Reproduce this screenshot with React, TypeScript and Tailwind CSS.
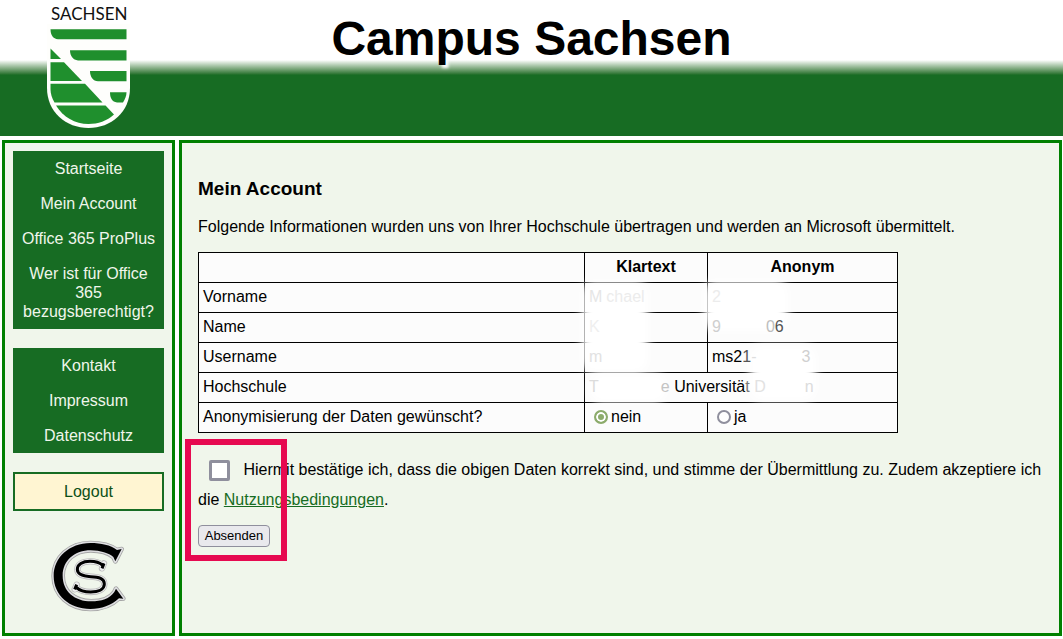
import { useState } from "react";
import type { ReactNode } from "react";

const mainLinks = [
  { name: "Startseite", href: "#start" },
  { name: "Mein Account", href: "#account" },
  { name: "Office 365 ProPlus", href: "#office" },
  { name: "Wer ist für Office 365 bezugsberechtigt?", href: "#berechtigt" },
];

const metaLinks = [
  { name: "Kontakt", href: "#kontakt" },
  { name: "Impressum", href: "#impressum" },
  { name: "Datenschutz", href: "#datenschutz" },
];

function SachsenLogo() {
  return (
    <svg width="84" height="129" viewBox="47 0 84 129" role="img" aria-label="Sachsen">
      <path
        d="M47 24H130V88C130 112 111 128 88.5 128S47 112 47 88Z"
        fill="#fefefc"
      />
      <text x="51" y="20" fontSize="17" fontFamily="Lato, sans-serif" fill="#111">
        SACHSEN
      </text>
      <g fill="#1f8f2d">
        <path d="M50.5 29.3H126.5V39.3H58C53 39 50.5 35 50.5 29.3Z" />
        <path d="M70 50.3H126.5V60.5H78C73 60 70 56 70 50.3Z" />
        <path d="M90 71H126.5V81.3H98C93 81 90 77 90 71Z" />
        <path d="M110 92.3H126.5C126.5 96 125 99.5 123 102.5H117C112 102 110 98 110 92.3Z" />
        <path d="M50.5 48.5L61 59H50.5Z" />
        <path d="M50.5 62.2H64L82 81H50.5Z" />
        <path d="M50.5 83.8H85L102.5 102.5H54.5C52 98 50.5 94 50.5 89Z" />
        <path d="M56 105.5H105.5L114 114.5C107 121 98 124 88.5 124C75 124 63 117 56 105.5Z" />
      </g>
    </svg>
  );
}

const cPath =
  "M276 85L262 88C242 73 215 67 182 67C120 67 72 110 72 166C72 224 120 265 182 265C215 265 245 255 268 233L281 234L259 204L254 214C240 234 215 242 185 242C135 242 99 212 99 165C99 120 135 89 183 89C212 89 238 98 251 109L257 122Z";
const sPath =
  "M223 128L217 143M219 134C207 123 193 122 181 122C158 122 143 132 143 146C143 162 160 167 183 168C208 169 224 173 224 190C224 207 205 214 183 214C165 214 150 210 140 200M135 206L141 192";

function CsLogo() {
  return (
    <svg width="80" height="74" viewBox="58 55 240 222" role="img" aria-label="Campus Sachsen">
      <g strokeLinejoin="round">
        <path d={cPath} fill="none" stroke="#a5a5a5" strokeWidth="14" />
        <path d={cPath} fill="none" stroke="#dedee1" strokeWidth="9" />
        <path d={cPath} fill="#000" />
      </g>
      <path d={sPath} fill="none" stroke="#bdbdbd" strokeWidth="19" strokeLinecap="round" />
      <path d={sPath} fill="none" stroke="#f0f0f1" strokeWidth="14" strokeLinecap="round" />
      <path d={sPath} fill="none" stroke="#000" strokeWidth="9" />
    </svg>
  );
}

function NavBlock({ label, links }: { label: string; links: { name: string; href: string }[] }) {
  return (
    <nav aria-label={label} className="mb-[19px] bg-[#176c23]">
      <ul>
        {links.map((link) => (
          <li key={link.name}>
            <a
              href={link.href}
              className="block px-2 py-2 text-center leading-[19px] text-[#f0f6eb] hover:underline"
            >
              {link.name}
            </a>
          </li>
        ))}
      </ul>
    </nav>
  );
}

function Cell({ children, colSpan }: { children?: ReactNode; colSpan?: number }) {
  return (
    <td colSpan={colSpan} className="h-[30px] border border-black px-1 pt-0 pb-[2px]">
      <span className="relative z-10 whitespace-nowrap">{children}</span>
    </td>
  );
}

const radioClass =
  "ml-[5px] mr-[3px] size-[14px] shrink-0 appearance-none rounded-full border-2 border-[#8f8f9d] bg-white checked:border-[#8cab6b] checked:bg-[#8cab6b] checked:shadow-[inset_0_0_0_2px_white]";

function AccountTable() {
  const [anonym, setAnonym] = useState(false);

  return (
    <div className="relative mt-[10px] w-[700px]">
      <table className="w-full table-fixed border-collapse bg-[#fcfcfc] leading-[27px]">
        <colgroup>
          <col className="w-[386px]" />
          <col className="w-[123px]" />
          <col className="w-[190px]" />
        </colgroup>
        <thead>
          <tr>
            <td className="h-[30px] border border-black p-0" />
            <th className="h-[30px] border border-black p-0 pb-[2px]">Klartext</th>
            <th className="h-[30px] border border-black p-0 pb-[2px]">Anonym</th>
          </tr>
        </thead>
        <tbody>
          <tr>
            <Cell>Vorname</Cell>
            <Cell>
              <span className="text-[#e6e6e6]">M</span>
              <span className="ml-1 text-[#ececec]">chael</span>
            </Cell>
            <Cell>
              <span className="text-[#ececec]">2</span>
            </Cell>
          </tr>
          <tr>
            <Cell>Name</Cell>
            <Cell>
              <span className="text-[#efefef]">K</span>
            </Cell>
            <Cell>
              <span className="text-[#cfcfcf]">9</span>
              <span className="ml-[45px] text-[#bdbdbd]">0</span>
              <span className="text-[#555]">6</span>
            </Cell>
          </tr>
          <tr>
            <Cell>Username</Cell>
            <Cell>
              <span className="text-[#e2e2e2]">m</span>
            </Cell>
            <Cell>
              ms2<span className="text-[#555]">1</span>
              <span className="text-[#dedede]">-</span>
              <span className="ml-[45px] text-[#d0d0d0]">3</span>
            </Cell>
          </tr>
          <tr>
            <Cell>Hochschule</Cell>
            <Cell colSpan={2}>
              <span className="text-[#dcdcdc]">T</span>
              <span className="ml-[62px] text-[#c4c4c4]">e</span> Universitä
              <span className="text-[#777]">t</span>{" "}
              <span className="text-[#e2e2e2]">D</span>
              <span className="ml-[39px] text-[#dcdcdc]">n</span>
            </Cell>
          </tr>
          <tr>
            <Cell>Anonymisierung der Daten gewünscht?</Cell>
            <Cell>
              <label className="flex items-center">
                <input
                  type="radio"
                  name="anonym"
                  checked={!anonym}
                  onChange={() => setAnonym(false)}
                  className={radioClass}
                />
                nein
              </label>
            </Cell>
            <Cell>
              <label className="flex items-center">
                <input
                  type="radio"
                  name="anonym"
                  checked={anonym}
                  onChange={() => setAnonym(true)}
                  className={radioClass}
                />
                ja
              </label>
            </Cell>
          </tr>
        </tbody>
      </table>

      {/* Soft patches over the personal data */}
      <div className="absolute left-[384px] top-[30px] h-[90px] w-[66px] rounded-xl bg-white blur-[5px]" />
      <div className="absolute left-[506px] top-[29px] h-[50px] w-[84px] rounded-xl bg-white blur-[5px]" />
      <div className="absolute left-[552px] top-[94px] h-[54px] w-[66px] rounded-xl bg-white blur-[5px]" />
      <div className="absolute left-[392px] top-[122px] h-[28px] w-[76px] rounded-xl bg-white blur-[4px]" />
    </div>
  );
}

export default function App() {
  const [accepted, setAccepted] = useState(false);

  return (
    <div className="flex min-h-screen flex-col bg-white pb-[3px] font-['Liberation_Sans',Arial,sans-serif] text-base text-black">
      {/* Header */}
      <header className="grid h-[136px] grid-cols-[1fr_auto_1fr] bg-linear-to-b from-white from-[60px] to-[#176c23] to-[75px]">
        <div className="pl-[47px]">
          <SachsenLogo />
        </div>
        <h1 className="pt-[11px] text-5xl leading-[55px] font-bold [text-shadow:3px_3px_3px_white]">
          Campus Sachsen
        </h1>
      </header>

      <div className="flex grow gap-1 pt-1 pr-px pl-[2px]">
        {/* Sidebar */}
        <aside className="w-[173px] shrink-0 border-3 border-[#008000] bg-[#f0f6eb] p-2">
          <NavBlock label="Hauptmenü" links={mainLinks} />
          <NavBlock label="Informationen" links={metaLinks} />
          <a
            href="#logout"
            className="block border-2 border-[#176c23] bg-[#fff5d2] py-2 text-center leading-[19px] text-[#0c4f16] hover:underline"
          >
            Logout
          </a>
          <div className="mt-7 flex justify-center">
            <CsLogo />
          </div>
        </aside>

        {/* Content */}
        <main className="relative min-w-0 grow border-3 border-[#008000] bg-[#f0f6eb] px-4 pt-[35px] pb-4">
          <h2 className="text-[19px] leading-[22px] font-bold">Mein Account</h2>
          <p className="mt-3 leading-[30px]">
            Folgende Informationen wurden uns von Ihrer Hochschule übertragen und werden an
            Microsoft übermittelt.
          </p>

          <AccountTable />

          <form className="mt-[22px]" onSubmit={(e) => e.preventDefault()}>
            <p className="leading-[30px]">
              <input
                id="accept"
                type="checkbox"
                checked={accepted}
                onChange={(e) => setAccepted(e.target.checked)}
                className="mr-[9px] ml-[11px] size-[21px] appearance-none rounded-xs border-3 border-[#8f8f9d] bg-white align-middle checked:bg-[#8cab6b]"
              />{" "}
              <label htmlFor="accept">
                Hiermit bestätige ich, dass die obigen Daten korrekt sind, und stimme der
                Übermittlung zu. Zudem akzeptiere ich
              </label>{" "}
              die{" "}
              <a href="#nutzungsbedingungen" className="text-[#176c23] underline">
                Nutzungsbedingungen
              </a>
              .
            </p>
            <button
              type="submit"
              className="mt-[10px] block h-[22px] min-w-[72px] rounded-sm border border-[#8f8f9d] bg-[#e9e9ed] px-[5px] text-[13px] leading-5"
            >
              Absenden
            </button>
          </form>

          {/* Highlight frame */}
          <div className="pointer-events-none absolute top-[296px] left-[3px] h-[122px] w-[102px] border-6 border-[#e60a50]" />
        </main>
      </div>
    </div>
  );
}
